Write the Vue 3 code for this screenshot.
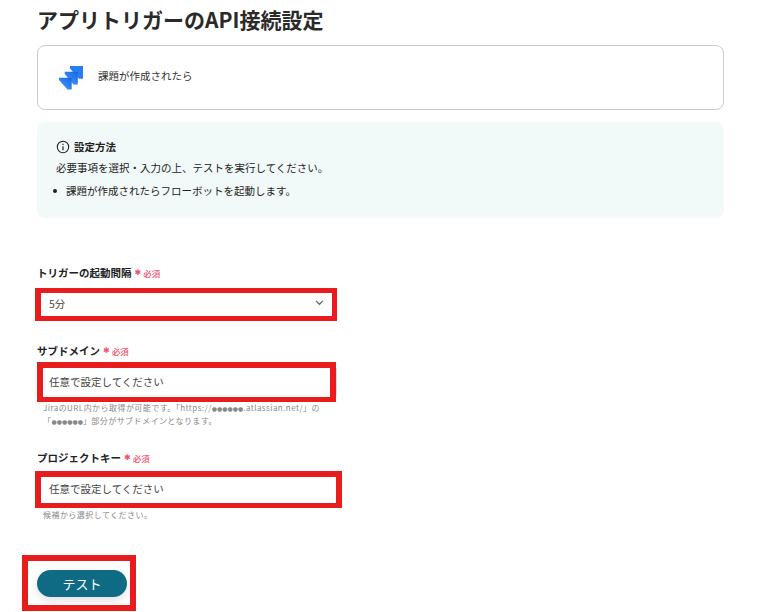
<script setup>
const steps = ['課題が作成されたらフローボットを起動します。']
</script>

<template>
  <main class="page">
    <h1 class="title">アプリトリガーのAPI接続設定</h1>
    <section class="card">
      <svg class="logo" viewBox="0 0 24 24" width="24" height="24">
        <defs>
          <linearGradient id="g1" x1="1" y1="0" x2="0.3" y2="0.8">
            <stop offset="0" stop-color="#1565dc" />
            <stop offset="1" stop-color="#3a90ff" />
          </linearGradient>
        </defs>
        <path d="M11 0H24.300V12.800H20L11 2.500z" fill="#2a7df2" />
        <path d="M5.700 5.700H18.800V18.400H14.500L5.700 8z" fill="url(#g1)" />
        <path d="M0 11.700H12.700V23.500H8.500L0 14z" fill="url(#g1)" />
      </svg>
      <span class="card-text">課題が作成されたら</span>
    </section>
    <section class="info">
      <div class="info-head">
        <svg viewBox="0 0 14 14" width="14" height="14" class="info-icon">
          <circle cx="7" cy="7" r="5.700" fill="none" stroke="#222" stroke-width="1.100" />
          <path d="M7 6.200v4M7 3.800v1.200" stroke="#222" stroke-width="1.200" fill="none" />
        </svg>
        <strong>設定方法</strong>
      </div>
      <p class="info-line">必要事項を選択・入力の上、テストを実行してください。</p>
      <ul class="info-list">
        <li v-for="s in steps" :key="s">{{ s }}</li>
      </ul>
    </section>

    <section class="field first">
      <div class="label">トリガーの起動間隔<span class="req"><i>✱</i>必須</span></div>
      <div class="control select">
        <span>5分</span>
        <svg viewBox="0 0 10 7" width="9" height="6" class="chev"><path d="M1 1l4 4 4-4" fill="none" stroke="#666" stroke-width="1.500" /></svg>
        <span class="mark mark-a"></span>
      </div>
    </section>

    <section class="field second">
      <div class="label">サブドメイン<span class="req"><i>✱</i>必須</span></div>
      <div class="control input">
        <span>任意で設定してください</span>
        <span class="mark mark-b"></span>
      </div>
      <p class="hint">JiraのURL内から取得が可能です。「https://<span class="dots">●●●●●●</span>.atlassian.net/」の<br />「<span class="dots">●●●●●●</span>」部分がサブドメインとなります。</p>
    </section>

    <section class="field third">
      <div class="label">プロジェクトキー<span class="req"><i>✱</i>必須</span></div>
      <div class="control input">
        <span>任意で設定してください</span>
        <span class="mark mark-c"></span>
      </div>
      <p class="hint">候補から選択してください。</p>
    </section>

    <div class="actions">
      <button class="test" type="button">テスト</button>
      <span class="mark mark-d"></span>
    </div>
  </main>
</template>

<style>
html, body { margin: 0; background: #fff; }
</style>

<style scoped>
.page {
  box-sizing: border-box;
  width: 760px;
  height: 612px;
  overflow: hidden;
  padding: 5px 36px 0 37px;
  font-family: "Noto Sans CJK JP", "Noto Sans", sans-serif;
  color: #222;
}
.title {
  margin: 0;
  font-size: 21px;
  line-height: 28px;
  font-weight: 700;
  color: #2a2a2a;
}
.card {
  box-sizing: border-box;
  margin-top: 12px;
  width: 687px;
  height: 65px;
  border: 1px solid #ccc;
  border-radius: 8px;
  display: flex;
  align-items: center;
  padding-left: 21px;
}
.logo { margin-right: 15px; }
.card-text { font-size: 10.500px; color: #333; padding-bottom: 4px; }
.info {
  box-sizing: border-box;
  margin-top: 12px;
  width: 687px;
  height: 96px;
  background: #f2f9f9;
  border-radius: 8px;
  padding: 16px 19px;
  font-size: 10.500px;
}
.info-head { display: flex; align-items: center; gap: 4px; line-height: 18px; }
.info-line { margin: 3px 0 0; line-height: 18px; }
.info-list { margin: 5px 0 0; padding-left: 10px; line-height: 18px; list-style: none; }
.info-list li { position: relative; }
.info-list li::before {
  content: ""; position: absolute; left: -13px; top: 7px;
  width: 4px; height: 4px; border-radius: 50%; background: #222;
}
.field { width: 300px; }
.first { margin-top: 47px; }
.second { margin-top: 23px; }
.third { margin-top: 23px; }
.label { font-size: 10.500px; font-weight: 700; line-height: 16px; color: #222; display: flex; align-items: center; }
.req { color: #f2506f; font-size: 8.500px; font-weight: 500; margin-left: 3px; display: inline-flex; align-items: center; }
.req i { font-style: normal; font-family: "DejaVu Sans", sans-serif; font-size: 8px; margin-right: 2px; }
.control {
  position: relative;
  box-sizing: border-box;
  margin-top: 5px;
  height: 34px;
  display: flex;
  align-items: center;
  justify-content: space-between;
  padding: 0 13px 0 12px;
  background: #fff;
  font-size: 10.500px;
  color: #444;
}
.input { height: 36px; border: 1px solid #ddd; border-radius: 6px; padding: 0 13px 2px 11px; }
.mark { position: absolute; box-sizing: border-box; border: 6px solid #e81c1c; }
.mark-a { left: -2px; right: 0; top: 2px; bottom: -1px; border-width: 5px 5px 5px 6px; }
.mark-b { left: -1px; right: 0; top: -3px; bottom: -3px; border-bottom-width: 5px; }
.mark-c { left: -3px; right: -6px; top: -1px; bottom: -2px; border-bottom-width: 5px; }
.hint { margin: 1px 0 0 6px; font-size: 8px; letter-spacing: .45px; line-height: 13px; color: #888; white-space: nowrap; }
.dots { font-family: "DejaVu Sans", sans-serif; font-size: 6px; letter-spacing: 0; line-height: 1px; }
.actions { position: relative; margin-top: 49px; width: 90px; }
.test {
  display: block;
  width: 90px;
  height: 27px;
  border: 0;
  border-radius: 14px;
  background: #0f6b83;
  color: #fff;
  font-family: inherit;
  font-size: 13px;
  box-shadow: 0 4px 10px rgba(0, 0, 0, 0.12);
}
.mark-d { left: -15px; width: 114px; top: -15px; height: 56px; }
</style>
